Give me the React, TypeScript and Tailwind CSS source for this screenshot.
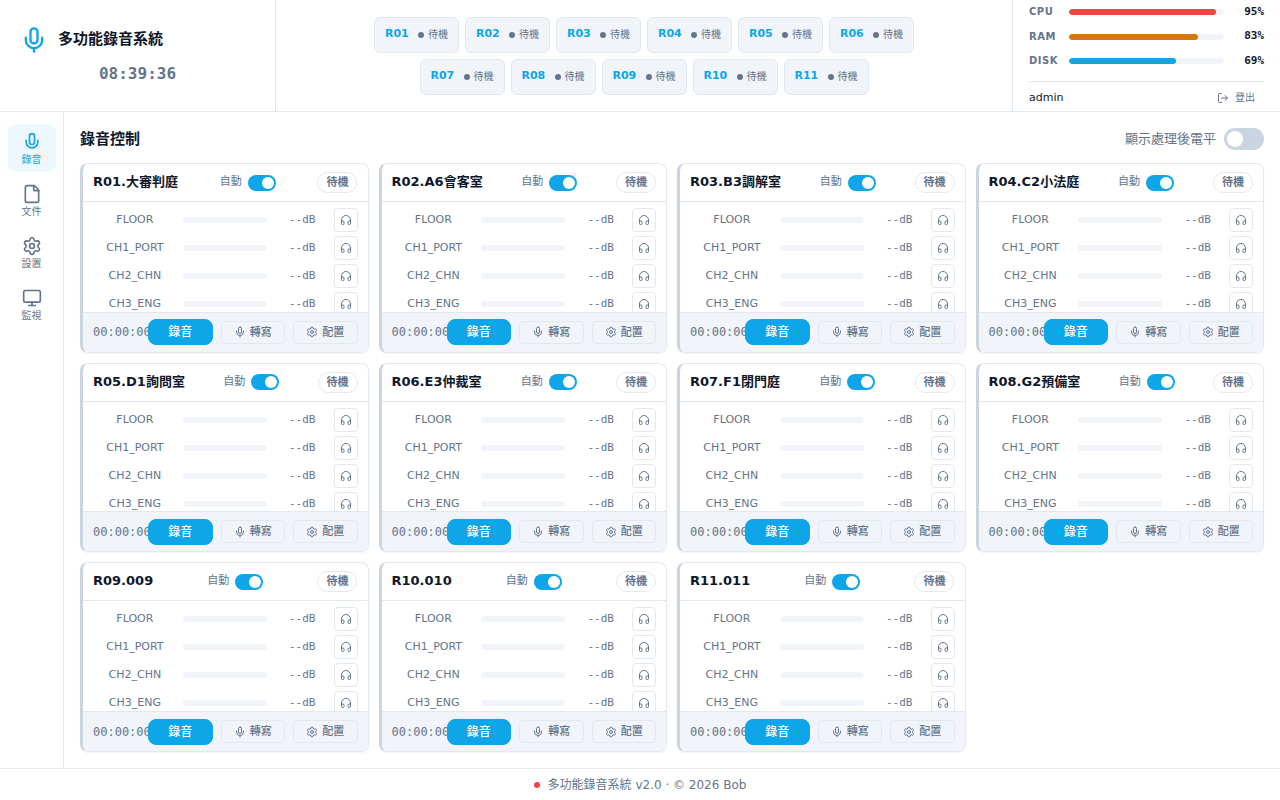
import React from "react";
import { File, Headphones, LogOut, Mic, Monitor, Settings } from "lucide-react";

const rooms = [
  { id: "R01", name: "大審判庭" },
  { id: "R02", name: "A6會客室" },
  { id: "R03", name: "B3調解室" },
  { id: "R04", name: "C2小法庭" },
  { id: "R05", name: "D1詢問室" },
  { id: "R06", name: "E3仲裁室" },
  { id: "R07", name: "F1閉門庭" },
  { id: "R08", name: "G2預備室" },
  { id: "R09", name: "009" },
  { id: "R10", name: "010" },
  { id: "R11", name: "011" },
];

const channels = ["FLOOR", "CH1_PORT", "CH2_CHN", "CH3_ENG"];

const usage = [
  { label: "CPU", value: 95, color: "bg-[#ef4444]" },
  { label: "RAM", value: 83, color: "bg-[#d97706]" },
  { label: "DISK", value: 69, color: "bg-[#0ea5e9]" },
];

function MicHead({ size }: { size: number }) {
  return (
    <svg
      width={size}
      height={size}
      viewBox="0 0 24 24"
      fill="none"
      stroke="currentColor"
      strokeWidth="2"
      strokeLinecap="round"
      strokeLinejoin="round"
      aria-hidden="true"
    >
      <rect x="9" y="2" width="6" height="13" rx="3" />
      <path d="M19 10v2a7 7 0 0 1-14 0v-2" />
    </svg>
  );
}

const navItems = [
  { label: "錄音", icon: <MicHead size={20} />, active: true },
  { label: "文件", icon: <File size={20} />, active: false },
  { label: "設置", icon: <Settings size={20} />, active: false },
  { label: "監視", icon: <Monitor size={20} />, active: false },
];

function Header() {
  return (
    <header className="flex h-28 shrink-0 border-b border-[#e2e8f0]">
      <div className="flex w-[276px] shrink-0 flex-col justify-center gap-2 border-r border-[#e2e8f0] px-5">
        <div className="flex items-center gap-[10px]">
          <Mic size={28} className="text-[#0ea5e9]" />
          <h1 className="pb-[2px] text-[15px] leading-6 font-bold">多功能錄音系統</h1>
        </div>
        <time className="text-center font-['DejaVu_Sans_Mono',monospace] text-base leading-6 font-bold text-[#64748b]">
          08:39:36
        </time>
      </div>
      <div className="flex min-w-0 flex-1 items-center justify-center">
        <ul className="flex max-w-[600px] flex-wrap justify-center gap-[6px]">
          {rooms.map((room) => (
            <li
              key={room.id}
              className="flex h-9 w-[85px] items-center justify-between rounded-md border border-[#e2e8f0] bg-[#f1f5f9] px-[10px]"
            >
              <span className="pb-[2px] text-[11px] leading-4 font-bold text-[#0ea5e9]">{room.id}</span>
              <span className="flex items-center gap-1 text-[10px] leading-4 text-[#64748b]">
                <span className="size-[6px] rounded-full bg-[#64748b]" />
                待機
              </span>
            </li>
          ))}
        </ul>
      </div>
      <div className="flex w-[268px] shrink-0 flex-col border-l border-[#e2e8f0] px-4 pt-1">
        <div className="flex h-[65px] flex-col justify-between">
          {usage.map((item) => (
            <div key={item.label} className="flex h-4 items-center">
              <span className="w-10 text-[10px] leading-4 font-bold tracking-wider text-[#64748b]">{item.label}</span>
              <div className="h-[6px] flex-1 overflow-hidden rounded-full bg-[#f1f5f9]">
                <div className={"h-full rounded-full " + item.color} style={{ width: item.value + "%" }} />
              </div>
              <span className="w-10 pb-px text-right font-['DejaVu_Sans_Mono',monospace] text-[11px] leading-4 font-bold">
                {item.value}%
              </span>
            </div>
          ))}
        </div>
        <div className="mt-3 flex items-center justify-between border-t border-[#e2e8f0] pt-2 text-[11px] leading-4">
          <span>admin</span>
          <button type="button" className="flex items-center gap-[6px] pr-[9px] text-[10px] text-[#64748b]">
            <LogOut size={12} />
            登出
          </button>
        </div>
      </div>
    </header>
  );
}

function Sidebar() {
  return (
    <nav className="flex w-16 shrink-0 flex-col items-center gap-1 border-r border-[#e2e8f0] pt-3">
      {navItems.map((item) => (
        <a
          key={item.label}
          href="#"
          className={
            "flex size-12 flex-col items-center justify-center rounded-lg pt-1 text-[10px] leading-4 " +
            (item.active ? "bg-[#ecf8fe] text-[#0ea5e9]" : "text-[#64748b]")
          }
        >
          {item.icon}
          {item.label}
        </a>
      ))}
    </nav>
  );
}

function RoomCard({ id, name }: { id: string; name: string }) {
  return (
    <article className="flex min-h-[180px] flex-col overflow-hidden rounded-lg border border-l-[3px] border-[#e2e8f0] border-l-[#cbd5e1] shadow-xs">
      <header className="flex h-[38px] shrink-0 items-center justify-between border-b border-[#e2e8f0] px-[10px]">
        <h3 className="pb-px text-[13px] leading-5 font-bold">
          {id}.{name}
        </h3>
        <label className="flex items-center gap-[6px] text-[11px] leading-4 text-[#64748b]">
          <span className="pb-px">自動</span>
          <input
            type="checkbox"
            defaultChecked
            className="h-4 w-7 appearance-none rounded-full bg-[#cbd5e1] p-[2px] before:block before:size-3 before:rounded-full before:bg-white checked:bg-[#0ea5e9] checked:before:ml-3"
          />
        </label>
        <span className="rounded-full border border-[#e2e8f0] px-2 text-[11px] leading-[19px] font-bold text-[#64748b]">
          待機
        </span>
      </header>
      <div className="flex h-0 grow flex-col gap-1 overflow-hidden px-[10px] pt-[6px] text-[#64748b]">
        {channels.map((channel) => (
          <div key={channel} className="grid shrink-0 grid-cols-[1fr_1fr_55px_24px] items-center gap-x-[6px]">
            <span className="text-center text-[11px] leading-4">{channel}</span>
            <div className="h-[6px] rounded-full bg-[#f1f5f9]" />
            <span className="pr-3 text-right font-['DejaVu_Sans_Mono',monospace] text-[11px] leading-4">--dB</span>
            <button
              type="button"
              aria-label={id + " " + channel}
              className="flex size-6 items-center justify-center rounded border border-[#e2e8f0]"
            >
              <Headphones size={12} />
            </button>
          </div>
        ))}
      </div>
      <footer className="flex h-10 shrink-0 items-center gap-2 border-t border-[#e2e8f0] bg-[#f1f5f9] px-[10px] text-[11px] leading-4 text-[#64748b]">
        <span className="w-[47px] shrink-0 font-['DejaVu_Sans_Mono',monospace] text-xs whitespace-nowrap">00:00:00</span>
        <button
          type="button"
          className="h-[26px] flex-1 rounded-lg border border-[#0ea5e9] bg-[#0ea5e9] text-xs font-medium text-white"
        >
          錄音
        </button>
        <button
          type="button"
          className="flex h-[23px] flex-1 items-center justify-center gap-1 rounded border border-[#e2e8f0] font-medium"
        >
          <Mic size={12} />
          <span className="pt-px">轉寫</span>
        </button>
        <button
          type="button"
          className="flex h-[23px] flex-1 items-center justify-center gap-1 rounded border border-[#e2e8f0] font-medium"
        >
          <Settings size={12} />
          <span className="pt-px">配置</span>
        </button>
      </footer>
    </article>
  );
}

export default function App() {
  return (
    <div className="flex h-screen flex-col bg-white font-['DejaVu_Sans','Noto_Sans_CJK_JP',sans-serif] text-[#0f172a]">
      <Header />
      <div className="flex min-h-0 flex-1">
        <Sidebar />
        <main className="flex min-w-0 flex-1 flex-col overflow-auto p-4">
          <div className="mb-3 flex h-[23px] shrink-0 items-start justify-between">
            <h2 className="text-[15px] leading-[22px] font-bold">錄音控制</h2>
            <label className="flex items-center gap-2 text-[13px] leading-5 text-[#64748b]">
              顯示處理後電平
              <input
                type="checkbox"
                className="h-[22px] w-10 appearance-none rounded-full bg-[#cbd5e1] p-[3px] before:block before:size-4 before:rounded-full before:bg-white checked:bg-[#0ea5e9] checked:before:ml-[18px]"
              />
            </label>
          </div>
          <section className="grid flex-1 auto-rows-fr grid-cols-[repeat(auto-fill,minmax(280px,1fr))] gap-[10px]">
            {rooms.map((room) => (
              <RoomCard key={room.id} id={room.id} name={room.name} />
            ))}
          </section>
        </main>
      </div>
      <footer className="flex h-8 shrink-0 items-center justify-center gap-2 border-t border-[#e2e8f0] text-xs text-[#64748b]">
        <span className="size-[6px] rounded-full bg-[#ef4444]" />
        多功能錄音系統 v2.0 · © 2026 Bob
      </footer>
    </div>
  );
}
